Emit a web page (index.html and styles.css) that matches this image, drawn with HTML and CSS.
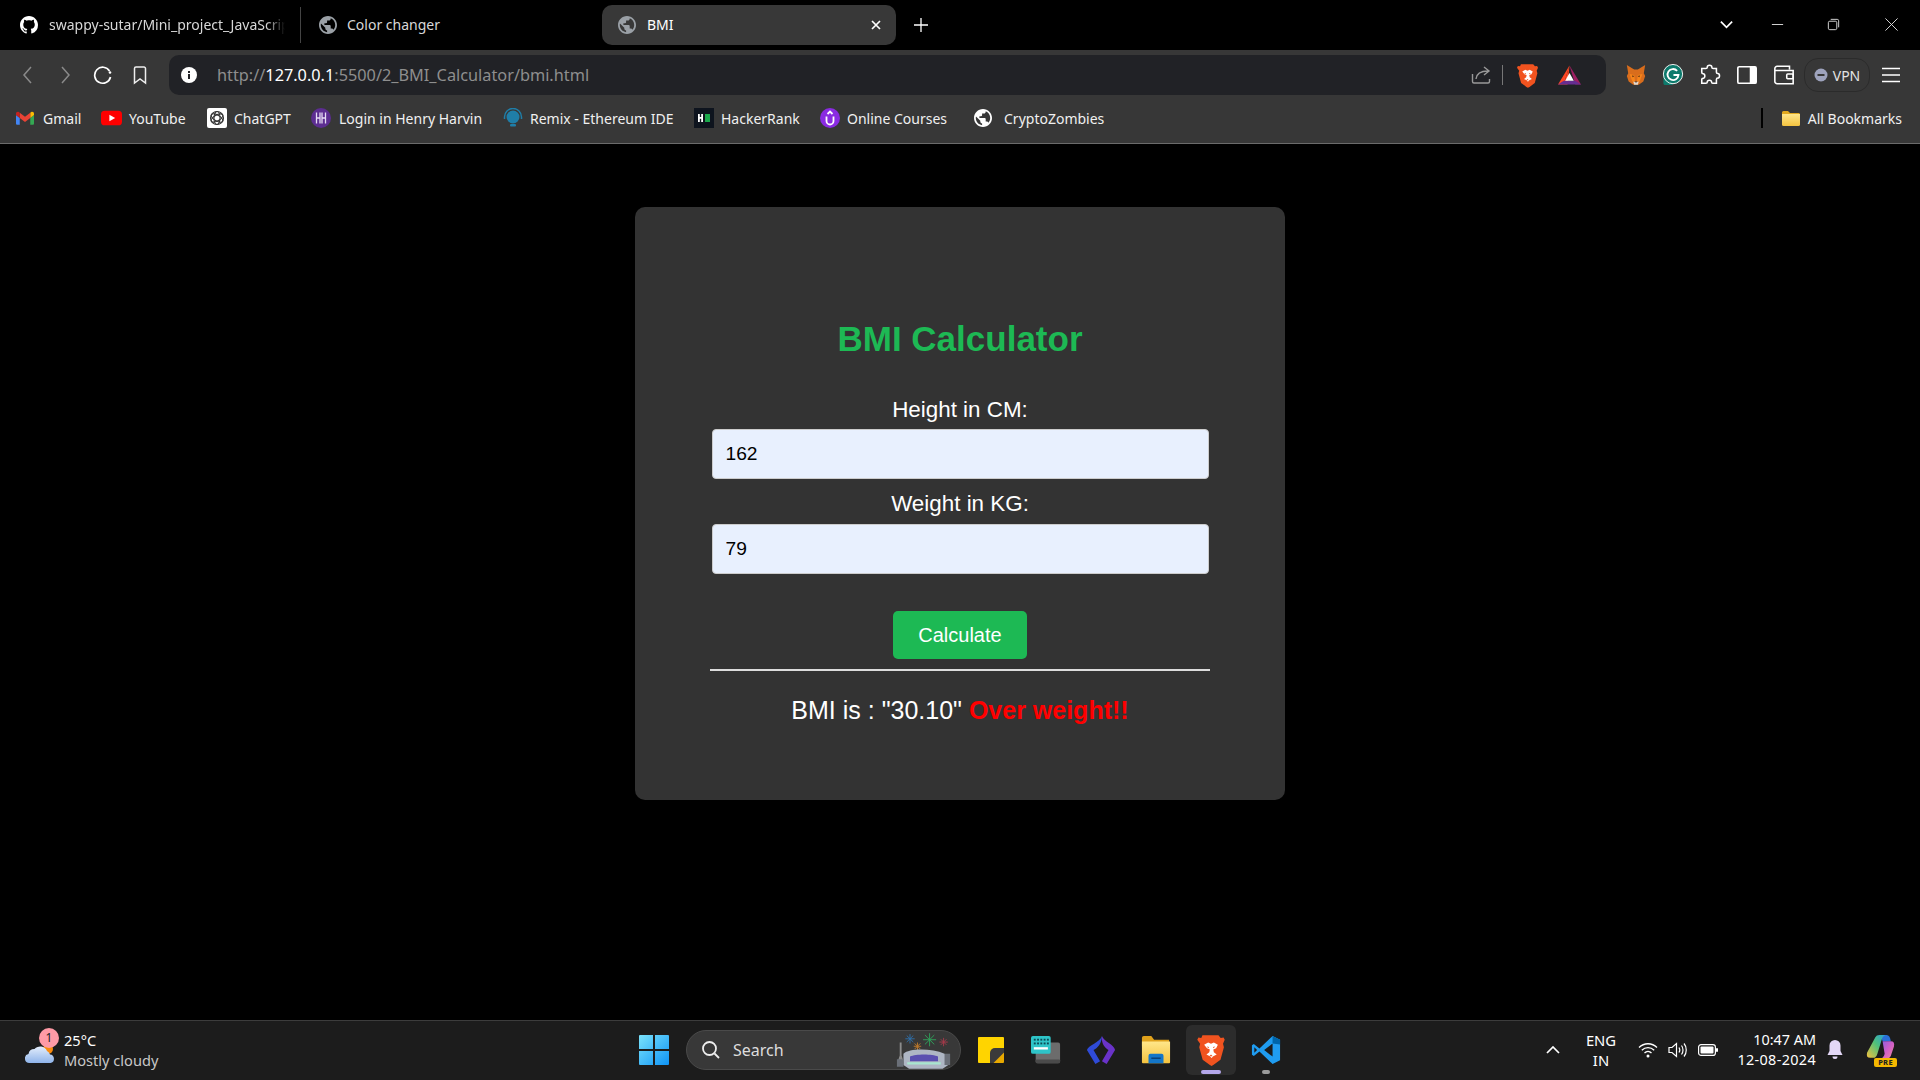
FILE: index.html
```html
<!DOCTYPE html>
<html lang="en">
<head>
<meta charset="utf-8">
<title>BMI</title>
<link rel="stylesheet" href="styles.css">
</head>
<body>
<svg class="sprite" width="0" height="0" aria-hidden="true">
  <defs>
    <symbol id="globe" viewBox="2 2 20 20"><path d="M12 2C6.48 2 2 6.48 2 12s4.48 10 10 10 10-4.48 10-10S17.52 2 12 2zm-1 17.93c-3.95-.49-7-3.85-7-7.93 0-.62.08-1.21.21-1.79L9 15v1c0 1.1.9 2 2 2v1.93zm6.9-2.54c-.26-.81-1-1.39-1.9-1.39h-1v-3c0-.55-.45-1-1-1H8v-2h2c.55 0 1-.45 1-1V7h2c1.1 0 2-.9 2-2v-.41c2.93 1.19 5 4.06 5 7.41 0 2.08-.8 3.97-2.1 5.39z"/></symbol>
    <symbol id="brave" viewBox="0 0 24 28">
      <path fill="#f1531f" d="M5 1h14l2 2.500 2.500-.5 1 2-1.500 3.500.8 3-3 11-6 4.500-1.800 1-1.800-1-6-4.500-3-11 .8-3L.5 5l1-2L4 3.500z" transform="translate(-.5 0)"/>
      <path fill="#fff" d="M6 9.500l3.500-2 2.500 1 2.500-1 3.500 2-1.500 3-2.500 1 .5 2.500 2.500 2-3 1.500-1.500 1.500-1.500-1.500-3-1.500 2.500-2 .5-2.500-2.500-1z"/>
      <path fill="#f1531f" d="M8.300 11l2 .3-.6 1.200zM15.700 11l-2 .3.6 1.200zM10.500 19.500h3L12 18z"/>
    </symbol>
    <linearGradient id="winGrad" x1="0" y1="0" x2="1" y2="1"><stop offset="0" stop-color="#7be3fb"/><stop offset="1" stop-color="#0e93f5"/></linearGradient>
    <linearGradient id="cloudGrad" x1="0" y1="0" x2="0" y2="1"><stop offset="0" stop-color="#e4eefc"/><stop offset="1" stop-color="#8fb4ea"/></linearGradient>
    <linearGradient id="folderGrad" x1="0" y1="0" x2="0" y2="1"><stop offset="0" stop-color="#ffe68a"/><stop offset="1" stop-color="#f4c33f"/></linearGradient>
    <linearGradient id="copA" x1="0" y1="1" x2="1" y2="0"><stop offset="0" stop-color="#f5c13c"/><stop offset=".55" stop-color="#4fc07a"/><stop offset="1" stop-color="#2a9fd8"/></linearGradient>
    <linearGradient id="copB" x1="0" y1="0" x2="1" y2="1"><stop offset="0" stop-color="#8a5fe0"/><stop offset=".5" stop-color="#d05fc8"/><stop offset="1" stop-color="#f08a9a"/></linearGradient>
  </defs>
</svg>

<div class="screen">
  <header class="tabstrip">
    <div class="tab tab-github">
      <svg class="ic18" viewBox="0 0 16 16" fill="#fff"><path d="M8 0C3.58 0 0 3.58 0 8c0 3.54 2.29 6.53 5.47 7.59.4.07.55-.17.55-.38 0-.19-.01-.82-.01-1.49-2.01.37-2.53-.49-2.69-.94-.09-.23-.48-.94-.82-1.13-.28-.15-.68-.52-.01-.53.63-.01 1.08.58 1.23.82.72 1.21 1.87.87 2.33.66.07-.52.28-.87.51-1.07-1.78-.2-3.64-.89-3.64-3.95 0-.87.31-1.59.82-2.15-.08-.2-.36-1.02.08-2.12 0 0 .67-.21 2.2.82.64-.18 1.32-.27 2-.27.68 0 1.36.09 2 .27 1.53-1.04 2.2-.82 2.2-.82.44 1.1.16 1.92.08 2.12.51.56.82 1.27.82 2.15 0 3.07-1.87 3.75-3.65 3.95.29.25.54.73.54 1.48 0 1.07-.01 1.93-.01 2.2 0 .21.15.46.55.38A8.013 8.013 0 0016 8c0-4.42-3.58-8-8-8z"/></svg>
      <span class="tab-title clipped">swappy-sutar/Mini_project_JavaScript</span>
    </div>
    <div class="tab-sep"></div>
    <div class="tab tab-color">
      <svg class="ic18 gray"><use href="#globe"/></svg>
      <span class="tab-title">Color changer</span>
    </div>
    <div class="tab tab-active">
      <svg class="ic18 gray"><use href="#globe"/></svg>
      <span class="tab-title active-title">BMI</span>
      <svg class="tab-close" viewBox="0 0 10 10" stroke="#fff" stroke-width="1.700"><path d="M1 1l8 8M9 1l-8 8"/></svg>
    </div>
    <svg class="new-tab" viewBox="0 0 14 14" stroke="#fff" stroke-width="1.300"><path d="M7 0v14M0 7h14"/></svg>
    <div class="win-controls">
      <svg class="win-ctl ctl-chev" viewBox="0 0 16 16" fill="none" stroke="#fff" stroke-width="1.800"><path d="M2 5l6 6 6-6"/></svg>
      <svg class="win-ctl" viewBox="0 0 16 16" fill="none" stroke="#ddd"><path d="M2 8h12"/></svg>
      <svg class="win-ctl ctl-restore" viewBox="0 0 16 16" fill="none" stroke="#ddd"><rect x="2.500" y="4.500" width="9" height="9" rx="1.500"/><path d="M5 2.500h7a1.500 1.500 0 011.500 1.500v7"/></svg>
      <svg class="win-ctl" viewBox="0 0 16 16" fill="none" stroke="#ddd"><path d="M1.500 1.500l13 13M14.500 1.500l-13 13"/></svg>
    </div>
  </header>

  <nav class="toolbar">
    <div class="nav-slot"><svg class="ic20" viewBox="0 0 20 20" fill="none" stroke="#8a8a8a" stroke-width="1.500"><path d="M13 2l-7 8 7 8"/></svg></div>
    <div class="nav-slot"><svg class="ic20" viewBox="0 0 20 20" fill="none" stroke="#8a8a8a" stroke-width="1.500"><path d="M7 2l7 8-7 8"/></svg></div>
    <div class="nav-slot"><svg class="ic20" viewBox="0 0 20 20" fill="none" stroke="#fff" stroke-width="1.700"><path d="M16.500 6A8 8 0 1017.500 12"/><circle cx="17" cy="7.500" r="1.300" fill="#fff" stroke="none"/></svg></div>
    <div class="nav-slot"><svg class="ic20" viewBox="0 0 20 20" fill="none" stroke="#eee" stroke-width="1.500"><path d="M4.500 3.500a1.500 1.500 0 011.500-1.500h8a1.500 1.500 0 011.500 1.500V18L10 14l-5.500 4z"/></svg></div>
    <div class="urlbar">
      <svg class="ic16" viewBox="0 0 16 16"><circle cx="8" cy="8" r="8" fill="#fff"/><rect x="7" y="7" width="2" height="5" fill="#212226"/><rect x="7" y="4" width="2" height="2" fill="#212226"/></svg>
      <div class="url"><span class="url-dim">http://</span><span class="url-host">127.0.0.1</span><span class="url-dim">:5500/2_BMI_Calculator/bmi.html</span></div>
      <svg class="ic20 url-share" viewBox="0 0 20 20" fill="none" stroke="#999" stroke-width="1.400"><path d="M1.500 9v7.500a1.500 1.500 0 001.500 1.500h14a1.500 1.500 0 001.500-1.500V14"/><path d="M5 14c.5-5 4-8 12-8M13 2l5 4-5 4"/></svg>
      <div class="url-sep"></div>
      <svg class="url-brave"><use href="#brave"/></svg>
      <svg class="url-bat" viewBox="0 0 24 20"><path fill="#ff4724" d="M12 0L0 20h6z"/><path fill="#ff4724" d="M12 0l-6 20h4z"/><path fill="#9e1f63" d="M12 0l12 20h-6z"/><path fill="#662d91" d="M0 20l6-4h12l6 4z"/><path fill="#fff" d="M12 8l4.500 8h-9z"/></svg>
    </div>
    <div class="ext-slot"><svg class="ic22" viewBox="0 0 24 24"><path fill="#d96d1c" d="M2 1l8 5h4l8-5-1.500 9 1.500 3-2 6-5 3.500h-6L4 19l-2-6 1.500-3z"/><path fill="#f6851b" d="M5 11l5 1 1 7H8zM19 11l-5 1-1 7h3z"/><path fill="#4a2a12" d="M7.500 12.500l2.500.5-1.500 1.500zM16.500 12.500l-2.500.5 1.500 1.500z"/><path fill="#e4d8cc" d="M9 19l3 1 3-1-1 3.500h-4z"/><path fill="#233447" d="M10.500 19h3L12 20.500z"/></svg></div>
    <div class="ext-slot"><svg class="ic22" viewBox="0 0 24 24"><path fill="#0d7a6c" d="M1.500 11v10c0 1.500 1 2 2.500 2h8z"/><circle cx="12" cy="11" r="10.500" fill="#0d7a6c"/><circle cx="12" cy="11" r="10.500" fill="none" stroke="#fff" stroke-width="1"/><path d="M16.500 7.500A6 6 0 1018 12h-5.500" fill="none" stroke="#fff" stroke-width="2"/></svg></div>
    <div class="ext-slot"><svg class="ic22" viewBox="0 0 24 24" fill="none" stroke="#fff" stroke-width="1.700"><path d="M9 3.500c0-2.800 5-2.800 5 0 0 1 .5 1.500 1.500 1.500H19v4c0 1 .5 1.300 1.500 1.300 2.500 0 2.500 5 0 5-1 0-1.500.5-1.500 1.500V21h-4c-1 0-1.300-.5-1.300-1.500 0-2.500-4.700-2.500-4.700 0 0 1-.5 1.500-1.500 1.500H3v-4c0-1 .5-1.300 1.500-1.300 2.500 0 2.500-5 0-5C3.500 10.700 3 10 3 9V5h4.500C8.500 5 9 4.500 9 3.500z"/></svg></div>
    <div class="ext-slot"><svg class="ic22" viewBox="0 0 24 24"><rect x="2" y="3" width="20" height="18" rx="1.500" fill="none" stroke="#fff" stroke-width="1.800"/><rect x="15" y="3" width="7" height="18" fill="#fff"/></svg></div>
    <div class="ext-slot"><svg class="ic22" viewBox="0 0 24 24" fill="none" stroke="#fff" stroke-width="1.700"><path d="M2 7V5a2.500 2.500 0 012.500-2.500H18V6M2 7v12a2.500 2.500 0 002.500 2.500H22V7z"/><rect x="15" y="11" width="7" height="5" rx="1"/></svg></div>
    <div class="vpn"><svg class="ic14" viewBox="0 0 14 14"><circle cx="7" cy="7" r="6.500" fill="#9ea3bd"/><rect x="3.500" y="6" width="7" height="2" fill="#373737"/></svg><span>VPN</span></div>
    <div class="menu-btn"><svg class="ic20" viewBox="0 0 20 20" stroke="#fff" stroke-width="1.500"><path d="M1 3.500h18M1 10h18M1 16.500h18"/></svg></div>
  </nav>

  <nav class="bookmarks">
    <a class="bm bm-gmail"><svg class="ic18" viewBox="0 0 24 18"><path fill="#4285f4" d="M1.500 18H5V9L0 5v11.500A1.500 1.500 0 001.500 18z"/><path fill="#34a853" d="M19 18h3.500a1.500 1.500 0 001.500-1.500V5l-5 4z"/><path fill="#fbbc04" d="M19 2v7l5-4V3c0-2-2.200-3-3.600-2z"/><path fill="#ea4335" d="M5 9V2l7 5.300L19 2v7l-7 5.300z"/><path fill="#c5221f" d="M0 3v2l5 4V2L3.600 1C2.200 0 0 1 0 3z"/></svg>Gmail</a>
    <a class="bm bm-yt"><svg class="ic18 wide" viewBox="0 0 20 14"><rect width="20" height="14" rx="3.500" fill="#f00"/><path fill="#fff" d="M8 4l5.500 3L8 10z"/></svg>YouTube</a>
    <a class="bm bm-gpt"><svg class="ic20" viewBox="0 0 20 20"><rect width="20" height="20" rx="2" fill="#fff"/><g fill="none" stroke="#333" stroke-width="1.100"><circle cx="10" cy="10" r="6.500"/><ellipse cx="10" cy="10" rx="6.500" ry="3" transform="rotate(30 10 10)"/><ellipse cx="10" cy="10" rx="6.500" ry="3" transform="rotate(-30 10 10)"/><ellipse cx="10" cy="10" rx="6.500" ry="3" transform="rotate(90 10 10)"/></g></svg>ChatGPT</a>
    <a class="bm bm-henry"><svg class="ic20" viewBox="0 0 20 20"><circle cx="10" cy="10" r="10" fill="#5c2d91"/><path stroke="#e6dcf5" stroke-width="1.300" d="M5.500 4.500v11M9 4.500v11M11 4.500v11M14.500 4.500v11M5.500 10H9M11 10h3.500"/></svg>Login in Henry Harvin</a>
    <a class="bm bm-remix"><svg class="ic20" viewBox="0 0 20 20"><circle cx="10" cy="9" r="6.500" fill="#1f7ea8"/><path fill="none" stroke="#1f7ea8" stroke-width="1.500" d="M1.500 11V9a8.500 8.500 0 0117 0v2"/><rect x="7" y="16" width="6" height="2.500" rx="1" fill="#1f7ea8"/></svg>Remix - Ethereum IDE</a>
    <a class="bm bm-hr"><svg class="ic20" viewBox="0 0 20 20"><rect width="20" height="20" fill="#0e141e"/><path fill="#fff" d="M4 6h1.800v3h1.400V6H9v8H7.200v-3.300H5.800V14H4z"/><rect x="11" y="6" width="5" height="8" fill="#1ba94c"/></svg>HackerRank</a>
    <a class="bm bm-online"><svg class="ic20" viewBox="0 0 20 20"><circle cx="10" cy="10" r="10" fill="#8a2be2"/><path fill="none" stroke="#fff" stroke-width="1.800" d="M6.500 8.500V13a3.500 3.500 0 007 0V8.500M7.500 6L10 3.500 12.500 6"/></svg>Online Courses</a>
    <a class="bm bm-crypto"><svg class="ic18 white"><use href="#globe"/></svg>CryptoZombies</a>
    <div class="bm-sep"></div>
    <a class="bm bm-all"><svg class="ic20" viewBox="0 0 20 18"><path fill="#e2a91f" d="M1 3.500A1.500 1.500 0 012.500 2H7l2 2h9.500v3H1z"/><path fill="url(#folderGrad)" d="M1 5h18v10.500a1.500 1.500 0 01-1.500 1.500h-15A1.500 1.500 0 011 15.500z"/></svg>All Bookmarks</a>
  </nav>

  <main class="page">
    <section class="card">
      <h1 class="card-title">BMI Calculator</h1>
      <label class="field-label" for="height">Height in CM:</label>
      <input class="field-input" id="height" type="text" value="162">
      <label class="field-label second" for="weight">Weight in KG:</label>
      <input class="field-input second-input" id="weight" type="text" value="79">
      <button class="calc-btn" type="button">Calculate</button>
      <hr class="rule">
      <p class="result">BMI is : "30.10" <strong class="verdict">Over weight!!</strong></p>
    </section>
  </main>

  <footer class="taskbar">
    <div class="tb-left">
      <div class="weather-icon">
        <svg class="cloud" viewBox="0 0 30 20"><circle cx="23" cy="6" r="5" fill="#f98a0d"/><path fill="url(#cloudGrad)" d="M4.500 20a4.500 4.500 0 01-1-8.900A6 6 0 019.500 6 7.500 7.500 0 0122 8a5.500 5.500 0 013 3.500A4.300 4.300 0 0125.500 20z"/></svg>
        <span class="badge">1</span>
      </div>
      <div class="weather-text"><span class="temp">25°C</span><span class="cond">Mostly cloudy</span></div>
    </div>
    <div class="tb-center">
      <svg class="win-logo" viewBox="0 0 30 30"><path fill="url(#winGrad)" d="M1 0h13v14H0V1a1 1 0 011-1zM16 0h13a1 1 0 011 1v13H16zM0 16h14v14H1a1 1 0 01-1-1zM16 16h14v13a1 1 0 01-1 1H16z"/></svg>
      <div class="search">
        <svg class="ic20" viewBox="0 0 20 20" fill="none" stroke="#eee" stroke-width="1.800"><circle cx="8.500" cy="8.500" r="6.500"/><path d="M13.500 13.500L18 18"/></svg>
        <span class="search-label">Search</span>
        <svg class="search-art" viewBox="0 0 60 40"><g fill="none" stroke-width="1"><g stroke="#2f6fa8"><path d="M15 3v10M10 8h10M11.500 4.500l7 7M18.500 4.500l-7 7"/></g><g stroke="#c07a2a"><path d="M23 12v8M19 16h8M20 13l6 6M26 13l-6 6"/></g><g stroke="#2fa35a"><path d="M36 2v14M29 9h14M31 4l10 10M41 4L31 14"/></g><g stroke="#a83a4a"><path d="M51 7v9M46.500 11.500h9M48 8.500l6 6M54 8.500l-6 6"/></g></g><path fill="#8c8c8c" d="M4 12l2 0 0 14 2 6H2l2-6z"/><path fill="#aeb6c4" d="M8 24c6-6 30-6 44 0l4 4v8l-6 4H14l-6-4z"/><path fill="#5a4fb0" d="M15 27c6-3 24-3 30 0v5H15z"/><path fill="#a8e6cf" d="M12 33h36v2.500H12z"/><path fill="#6a6f78" d="M52 24h6v12h-6zM1 30h7v8H1z"/></svg>
      </div>
      <div class="task-slot"><svg class="ic28" viewBox="0 0 28 28"><path fill="#ffd400" d="M2 1h24a1 1 0 011 1v16l-9 9H2a1 1 0 01-1-1V2a1 1 0 011-1z"/><path fill="#3a3a3a" d="M27 12v6l-9 9h-5V17a5 5 0 015-5z"/><path fill="#e8a900" d="M27 16.500V26a1 1 0 01-1 1h-9.500z"/></svg></div>
      <div class="task-slot"><svg class="ic32" viewBox="0 0 32 32"><rect x="5" y="8" width="26" height="22" rx="2" fill="#6c6c6c"/><rect x="5" y="26" width="26" height="4" rx="1" fill="#4a4a4a"/><rect x="0" y="1" width="21" height="19" rx="2" fill="#2ec4c8"/><g fill="#0c4a55"><rect x="3" y="4" width="2" height="2"/><rect x="6.500" y="4" width="2" height="2"/><rect x="10" y="4" width="2" height="2"/><rect x="13.500" y="4" width="2" height="2"/><rect x="17" y="4" width="2" height="2"/><rect x="3" y="8" width="2" height="2"/><rect x="6.500" y="8" width="2" height="2"/><rect x="10" y="8" width="2" height="2"/><rect x="13.500" y="8" width="2" height="2"/><rect x="17" y="8" width="2" height="2"/></g><rect x="3" y="13" width="15" height="2.500" fill="#fff"/></svg></div>
      <div class="task-slot"><svg class="ic32" viewBox="0 0 32 32"><path fill="#2f4bd8" d="M17 1C15 8 2 11 1 16l9 15 5-3-7-12c4-2 9-7 9-15z"/><path fill="#6a33c9" d="M17 1c2 6 13 9 14 15l-9 15-5-3 7-12c-3-2-8-6-7-15z"/></svg></div>
      <div class="task-slot"><svg class="ic32" viewBox="0 0 32 32"><path fill="#e0a21c" d="M1 3a2 2 0 012-2h8l3 4h16v7H1z"/><path fill="url(#folderGrad)" d="M1 7h30v22a1 1 0 01-1 1H2a1 1 0 01-1-1z"/><path fill="#1476c8" d="M8 22a2 2 0 012-2h12a2 2 0 012 2v8H8z"/><rect x="11" y="24" width="10" height="1.500" fill="#0b3d73"/></svg></div>
      <div class="task-slot task-active"><svg class="task-brave"><use href="#brave"/></svg><span class="pill-active"></span></div>
      <div class="task-slot"><svg class="ic32" viewBox="0 0 32 32"><path fill="#1f9cf0" d="M23 1l8 4v22l-8 4zM9 14.500L3 9.500 1 11v10l2 1.500 6-5L23 31V23l-9-7 9-7V1z"/><path fill="#0065a9" d="M23 1l8 4v5l-8-1z"/><path fill="#1c1c1c" d="M3.500 13l3 3-3 3z"/></svg><span class="pill-open"></span></div>
    </div>
    <div class="tb-right">
      <svg class="tray-chev" viewBox="0 0 14 8" fill="none" stroke="#fff" stroke-width="1.700"><path d="M1 7l6-6 6 6"/></svg>
      <div class="lang"><span>ENG</span><span>IN</span></div>
      <svg class="tray-wifi" viewBox="0 0 20 16" fill="none" stroke="#fff" stroke-width="1.300"><path d="M1 5.500c5-5 13-5 18 0M3.800 8.300c3.500-3.500 8.900-3.500 12.400 0M6.500 11c2-2 5-2 7 0"/><circle cx="10" cy="14" r="1.500" fill="#fff" stroke="none"/></svg>
      <svg class="tray-vol" viewBox="0 0 20 16" fill="none" stroke="#fff" stroke-width="1.200"><path d="M1 5.500v5h3l4.500 4V1.500L4 5.500z"/><path d="M11 5.500c1 1.500 1 3.500 0 5M13.500 3.500c2 2.500 2 6.500 0 9M16 1.500c3 3.500 3 9.500 0 13"/></svg>
      <svg class="tray-bat" viewBox="0 0 20 12"><rect x=".6" y=".6" width="16.800" height="10.800" rx="2.500" fill="none" stroke="#fff" stroke-width="1.200"/><rect x="2.500" y="2.500" width="13" height="7" rx="1" fill="#fff"/><rect x="18" y="4" width="2" height="4" rx="1" fill="#fff"/></svg>
      <div class="clock"><span>10:47 AM</span><span class="date">12-08-2024</span></div>
      <svg class="tray-bell" viewBox="0 0 16 20" fill="#e3d7f7"><path d="M8 0a5.500 5.500 0 00-5.500 5.500V11L.5 15h15l-2-4V5.500A5.500 5.500 0 008 0z"/><path d="M5.500 16.500h5a2.500 2.500 0 01-5 0z"/></svg>
      <div class="copilot">
        <svg class="cop-logo" viewBox="0 0 28 24"><path fill="#2a6fd8" d="M13 0h7q3 0 4 6h-8q-1-4-3-6z"/><path fill="url(#copA)" d="M9 2q1-2 4-2h6q-3 1-4 5l-4 13q-1 4-4 4H4q-4 0-3-5z"/><path fill="url(#copB)" d="M16 6h8q4 0 3 5l-3 9q-1 3-5 3h-5q3-1 4-5z"/></svg>
        <span class="pre">PRE</span>
      </div>
    </div>
  </footer>
</div>
</body>
</html>
```
FILE: styles.css
```css
* { box-sizing: border-box; }
html, body { margin: 0; padding: 0; background: #000; }
body { font-family: "Noto Sans", "Open Sans", sans-serif; color: #fff; overflow: hidden; }
.sprite { position: absolute; }
svg { display: block; flex: none; }
.screen { width: 1920px; height: 1080px; display: flex; flex-direction: column; }

.ic14 { width: 14px; height: 14px; }
.ic16 { width: 16px; height: 16px; }
.ic18 { width: 18px; height: 18px; }
.ic18.wide { width: 21px; height: 18px; }
.ic20 { width: 20px; height: 20px; }
.ic22 { width: 22px; height: 22px; }
.ic28 { width: 28px; height: 28px; }
.ic32 { width: 30px; height: 30px; }
.gray { fill: #9aa0a6; }
.white { fill: #fff; }

/* tabs */
.tabstrip { height: 50px; flex: none; background: #000; display: flex; align-items: center; padding-bottom: 1px; }
.tab { display: flex; align-items: center; height: 40px; font-size: 14px; color: #d8d8d8; }
.tab-github { width: 300px; padding-left: 20px; gap: 11px; }
.tab-title { white-space: nowrap; }
.clipped { width: 236px; overflow: hidden; -webkit-mask-image: linear-gradient(to right, #000 92%, transparent); mask-image: linear-gradient(to right, #000 92%, transparent); }
.tab-sep { width: 1px; height: 36px; background: #444; flex: none; }
.tab-color { width: 301px; padding-left: 18px; gap: 10px; }
.tab-active { width: 294px; background: #383838; border-radius: 10px; padding: 0 15px 0 16px; gap: 11px; color: #fff; }
.active-title { flex: 1; }
.tab-close { width: 10px; height: 10px; }
.new-tab { width: 14px; height: 14px; margin-left: 18px; }
.win-controls { margin-left: auto; display: flex; align-items: center; gap: 41px; padding-right: 21px; }
.win-ctl { width: 15px; height: 15px; }
.ctl-chev { margin-right: -5px; }
.ctl-restore { margin-right: 2px; }

/* toolbar */
.toolbar { height: 50px; flex: none; background: #373737; display: flex; align-items: center; padding: 5px 0 5px 9px; }
.nav-slot { width: 37.500px; display: flex; justify-content: center; }
.urlbar { margin-left: 10px; width: 1437px; height: 40px; flex: none; background: #212226; border-radius: 10px; display: flex; align-items: center; padding-left: 12px; }
.url { margin-left: 20px; font-size: 16.300px; white-space: nowrap; flex: 1; }
.url-dim { color: #8e8e8e; }
.url-host { color: #fff; }
.url-share { margin-right: 11px; }
.url-sep { width: 1px; height: 20px; background: #777; }
.url-brave { width: 21px; height: 25px; margin-left: 14px; }
.url-bat { width: 23px; height: 20px; margin-left: 20px; margin-right: 25px; }
.ext-slot { width: 37px; display: flex; justify-content: center; }
.urlbar + .ext-slot { margin-left: 11px; }
.vpn { width: 66px; height: 34px; margin-left: 2px; border: 1px solid #2b2b2b; border-radius: 14px; display: flex; align-items: center; justify-content: center; gap: 5px; font-size: 14px; color: #e4e4e4; }
.menu-btn { margin-left: 11px; }

/* bookmarks */
.bookmarks { height: 44px; flex: none; background: #373737; border-bottom: 1px solid #6b6b6b; display: flex; align-items: center; padding: 0 18px 7px 16px; font-size: 14px; color: #f0f0f0; }
.bm { display: flex; align-items: center; gap: 8px; white-space: nowrap; }
.bm-gmail { width: 85px; gap: 9px; }
.bm-yt { width: 106px; gap: 7px; }
.bm-gpt { width: 104px; gap: 7px; }
.bm-henry { width: 192px; gap: 8px; }
.bm-remix { width: 191px; gap: 7px; }
.bm-hr { width: 126px; gap: 7px; }
.bm-online { width: 153px; gap: 7px; }
.bm-crypto { width: 190px; gap: 12px; padding-left: 1px; }
.bm-sep { width: 2px; height: 20px; background: #000; margin-left: auto; }
.bm-all { margin-left: 18px; gap: 7px; }

/* page */
.page { flex: 1; background: #000; display: flex; justify-content: center; align-items: flex-start; font-family: "Liberation Sans", Arial, sans-serif; }
.card { width: 650px; height: 593px; margin-top: 63px; padding: 112px 75px 0; background: #333; border-radius: 10px; display: flex; flex-direction: column; align-items: center; }
.card-title { margin: 0; font-size: 35px; line-height: 40px; font-weight: 700; color: #1db954; }
.field-label { margin-top: 38px; font-size: 22.400px; line-height: 26px; color: #fff; }
.field-label.second { margin-top: 12px; }
.field-input { width: 497px; height: 50px; margin-top: 6px; padding: 0 12px 0 13px; border: 1px solid #ccc; border-radius: 4px; background: #e8f0fe; color: #000; font-family: "Liberation Sans", Arial, sans-serif; font-size: 19.200px; }
.second-input { margin-top: 7px; }
.calc-btn { width: 134px; height: 48px; margin-top: 37px; padding: 0; border: 0; border-radius: 5px; background: #1db954; color: #fff; font-family: "Liberation Sans", Arial, sans-serif; font-size: 20px; }
.rule { width: 500px; height: 2px; margin: 10px 0 0; border: 0; background: #ddd; }
.result { margin: 24px 0 0; font-size: 25px; line-height: 30px; color: #fff; white-space: nowrap; }
.verdict { color: #f00; }

/* taskbar */
.taskbar { height: 60px; flex: none; background: #1c1c1c; border-top: 1px solid #3c3c3c; padding-bottom: 1px; display: flex; align-items: center; position: relative; }
.tb-left { width: 639px; flex: none; display: flex; align-items: center; padding-left: 24px; gap: 10px; }
.weather-icon { width: 30px; height: 40px; position: relative; }
.cloud { width: 30px; height: 20px; position: absolute; left: 1px; bottom: 7px; }
.badge { position: absolute; left: 15px; top: -2px; width: 20px; height: 20px; border-radius: 50%; background: #ff9aa6; color: #222; font-size: 12px; line-height: 20px; text-align: center; }
.weather-text { display: flex; flex-direction: column; font-size: 14.600px; line-height: 20px; }
.temp { color: #fff; }
.cond { color: #c8c8c8; }
.tb-center { display: flex; align-items: center; }
.win-logo { width: 30px; height: 30px; }
.search { width: 275px; height: 40px; margin-left: 17px; margin-right: 2px; background: #383838; border: 1px solid #4a4a4a; border-radius: 20px; display: flex; align-items: center; padding-left: 14px; gap: 12px; font-size: 16px; color: #ddd; }
.search-label { flex: 1; }
.search-art { width: 56px; height: 38px; margin-right: 8px; }
.task-slot { width: 55px; height: 50px; display: flex; flex-direction: column; align-items: center; justify-content: center; position: relative; }
.task-active { width: 50px; margin: 0 2.500px; background: #2c2c2c; border-radius: 6px; }
.task-brave { width: 28px; height: 32px; }
.pill-active { position: absolute; bottom: 1px; width: 20px; height: 4px; border-radius: 2px; background: #b4a7ea; }
.pill-open { position: absolute; bottom: 1px; width: 8px; height: 4px; border-radius: 2px; background: #9a9a9a; }
.tb-right { margin-left: auto; width: 381px; display: flex; align-items: center; font-size: 14px; position: relative; height: 100%; }
.tray-chev { width: 14px; height: 8px; margin-left: 7px; }
.lang { width: 50px; margin-left: 16px; display: flex; flex-direction: column; align-items: center; line-height: 20px; font-size: 14.800px; }
.tray-wifi { width: 20px; height: 16px; margin-left: 12px; }
.tray-vol { width: 20px; height: 16px; margin-left: 10px; }
.tray-bat { width: 20px; height: 12px; margin-left: 10px; }
.clock { width: 98px; display: flex; flex-direction: column; align-items: flex-end; line-height: 20px; font-size: 14.400px; }
.date { letter-spacing: .35px; }
.tray-bell { width: 16px; height: 20px; margin-left: 11px; }
.copilot { width: 30px; height: 30px; margin-left: 23px; position: relative; }
.cop-logo { width: 29px; height: 25px; }
.pre { position: absolute; right: -1px; bottom: -2px; width: 23px; height: 9px; background: #f5b800; border-radius: 2px; color: #222; font-size: 7.500px; font-weight: 800; line-height: 9px; text-align: center; letter-spacing: .3px; }
```
